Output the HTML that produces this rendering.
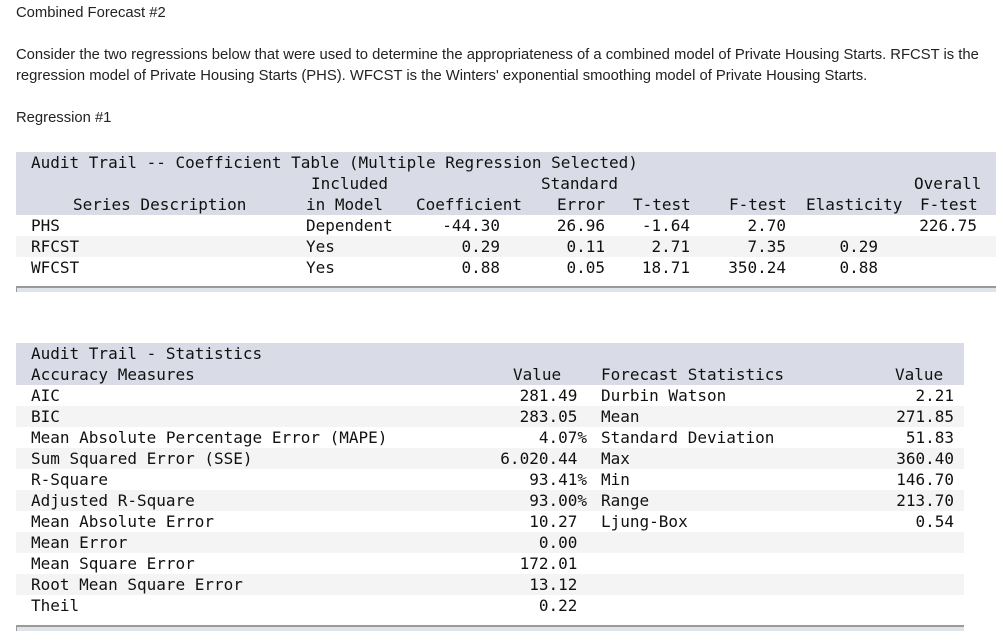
<!DOCTYPE html>
<html><head><style>
body{margin:0;background:#fff;width:1003px;height:642px;position:relative;overflow:hidden;font-family:"Liberation Sans",sans-serif;color:#222;}
.t{position:absolute;left:16px;font-size:14.8px;white-space:nowrap;color:#222}
.m{font-family:"DejaVu Sans Mono",monospace;font-size:16px;color:#111;}
.row{position:absolute;height:21px;}
.s{position:absolute;white-space:pre;line-height:21px;top:0}
.r{text-align:right}
</style></head><body>
<div class="t" style="top:5px">Combined Forecast #2</div>
<div class="t" style="top:47px">Consider the two regressions below that were used to determine the appropriateness of a combined model of Private Housing Starts. RFCST is the</div>
<div class="t" style="top:68px">regression model of Private Housing Starts (PHS). WFCST is the Winters' exponential smoothing model of Private Housing Starts.</div>
<div class="t" style="top:110px">Regression #1</div>

<div class="m">
<div class="row" style="top:152px;left:16px;width:980px;height:63px;background:#d9dce6"></div>
<div class="row" style="top:236px;left:16px;width:980px;background:#f4f4f4"></div>
<div class="row" style="top:286px;left:16px;width:980px;height:6px;background:#dfe3ea;border-top:2px solid #9a9a9a;border-left:1px solid #9a9a9a;box-sizing:border-box"></div>

<div class="s" style="top:152px;left:31px">Audit Trail -- Coefficient Table (Multiple Regression Selected)</div>
<div class="s" style="top:173px;left:311px">Included</div>
<div class="s" style="top:173px;left:541px">Standard</div>
<div class="s" style="top:173px;left:914px">Overall</div>
<div class="s" style="top:194px;left:73px">Series Description</div>
<div class="s" style="top:194px;left:306px">in Model</div>
<div class="s" style="top:194px;left:416px">Coefficient</div>
<div class="s" style="top:194px;left:557px">Error</div>
<div class="s" style="top:194px;left:633px">T-test</div>
<div class="s" style="top:194px;left:729px">F-test</div>
<div class="s" style="top:194px;left:806px">Elasticity</div>
<div class="s" style="top:194px;left:920px">F-test</div>

<div class="s" style="top:215px;left:31px">PHS</div>
<div class="s" style="top:236px;left:31px">RFCST</div>
<div class="s" style="top:257px;left:31px">WFCST</div>
<div class="s" style="top:215px;left:306px">Dependent</div>
<div class="s" style="top:236px;left:306px">Yes</div>
<div class="s" style="top:257px;left:306px">Yes</div>
<div class="s r" style="top:215px;left:400px;width:100px">-44.30</div>
<div class="s r" style="top:236px;left:400px;width:100px">0.29</div>
<div class="s r" style="top:257px;left:400px;width:100px">0.88</div>
<div class="s r" style="top:215px;left:505px;width:100px">26.96</div>
<div class="s r" style="top:236px;left:505px;width:100px">0.11</div>
<div class="s r" style="top:257px;left:505px;width:100px">0.05</div>
<div class="s r" style="top:215px;left:590px;width:100px">-1.64</div>
<div class="s r" style="top:236px;left:590px;width:100px">2.71</div>
<div class="s r" style="top:257px;left:590px;width:100px">18.71</div>
<div class="s r" style="top:215px;left:686px;width:100px">2.70</div>
<div class="s r" style="top:236px;left:686px;width:100px">7.35</div>
<div class="s r" style="top:257px;left:686px;width:100px">350.24</div>
<div class="s r" style="top:236px;left:778px;width:100px">0.29</div>
<div class="s r" style="top:257px;left:778px;width:100px">0.88</div>
<div class="s r" style="top:215px;left:877px;width:100px">226.75</div>

<div class="row" style="top:343px;left:16px;width:948px;height:42px;background:#d9dce6"></div>
<div class="row" style="top:406px;left:16px;width:948px;background:#f4f4f4"></div>
<div class="row" style="top:448px;left:16px;width:948px;background:#f4f4f4"></div>
<div class="row" style="top:490px;left:16px;width:948px;background:#f4f4f4"></div>
<div class="row" style="top:532px;left:16px;width:948px;background:#f4f4f4"></div>
<div class="row" style="top:574px;left:16px;width:948px;background:#f4f4f4"></div>
<div class="row" style="top:625px;left:16px;width:948px;height:6px;background:#dfe3ea;border-top:2px solid #9a9a9a;border-left:1px solid #9a9a9a;box-sizing:border-box"></div>

<div class="s" style="top:343px;left:31px">Audit Trail - Statistics</div>
<div class="s" style="top:364px;left:31px">Accuracy Measures</div>
<div class="s" style="top:364px;left:513px">Value</div>
<div class="s" style="top:364px;left:601px">Forecast Statistics</div>
<div class="s" style="top:364px;left:895px">Value</div>

<div class="s" style="top:385px;left:31px">AIC</div>
<div class="s" style="top:406px;left:31px">BIC</div>
<div class="s" style="top:427px;left:31px">Mean Absolute Percentage Error (MAPE)</div>
<div class="s" style="top:448px;left:31px">Sum Squared Error (SSE)</div>
<div class="s" style="top:469px;left:31px">R-Square</div>
<div class="s" style="top:490px;left:31px">Adjusted R-Square</div>
<div class="s" style="top:511px;left:31px">Mean Absolute Error</div>
<div class="s" style="top:532px;left:31px">Mean Error</div>
<div class="s" style="top:553px;left:31px">Mean Square Error</div>
<div class="s" style="top:574px;left:31px">Root Mean Square Error</div>
<div class="s" style="top:595px;left:31px">Theil</div>

<div class="s r" style="top:385px;left:437px;width:150px">281.49 </div>
<div class="s r" style="top:406px;left:437px;width:150px">283.05 </div>
<div class="s r" style="top:427px;left:437px;width:150px">4.07%</div>
<div class="s r" style="top:448px;left:437px;width:150px">6.020.44 </div>
<div class="s r" style="top:469px;left:437px;width:150px">93.41%</div>
<div class="s r" style="top:490px;left:437px;width:150px">93.00%</div>
<div class="s r" style="top:511px;left:437px;width:150px">10.27 </div>
<div class="s r" style="top:532px;left:437px;width:150px">0.00 </div>
<div class="s r" style="top:553px;left:437px;width:150px">172.01 </div>
<div class="s r" style="top:574px;left:437px;width:150px">13.12 </div>
<div class="s r" style="top:595px;left:437px;width:150px">0.22 </div>

<div class="s" style="top:385px;left:601px">Durbin Watson</div>
<div class="s" style="top:406px;left:601px">Mean</div>
<div class="s" style="top:427px;left:601px">Standard Deviation</div>
<div class="s" style="top:448px;left:601px">Max</div>
<div class="s" style="top:469px;left:601px">Min</div>
<div class="s" style="top:490px;left:601px">Range</div>
<div class="s" style="top:511px;left:601px">Ljung-Box</div>

<div class="s r" style="top:385px;left:854px;width:100px">2.21</div>
<div class="s r" style="top:406px;left:854px;width:100px">271.85</div>
<div class="s r" style="top:427px;left:854px;width:100px">51.83</div>
<div class="s r" style="top:448px;left:854px;width:100px">360.40</div>
<div class="s r" style="top:469px;left:854px;width:100px">146.70</div>
<div class="s r" style="top:490px;left:854px;width:100px">213.70</div>
<div class="s r" style="top:511px;left:854px;width:100px">0.54</div>
</div>
</body></html>
